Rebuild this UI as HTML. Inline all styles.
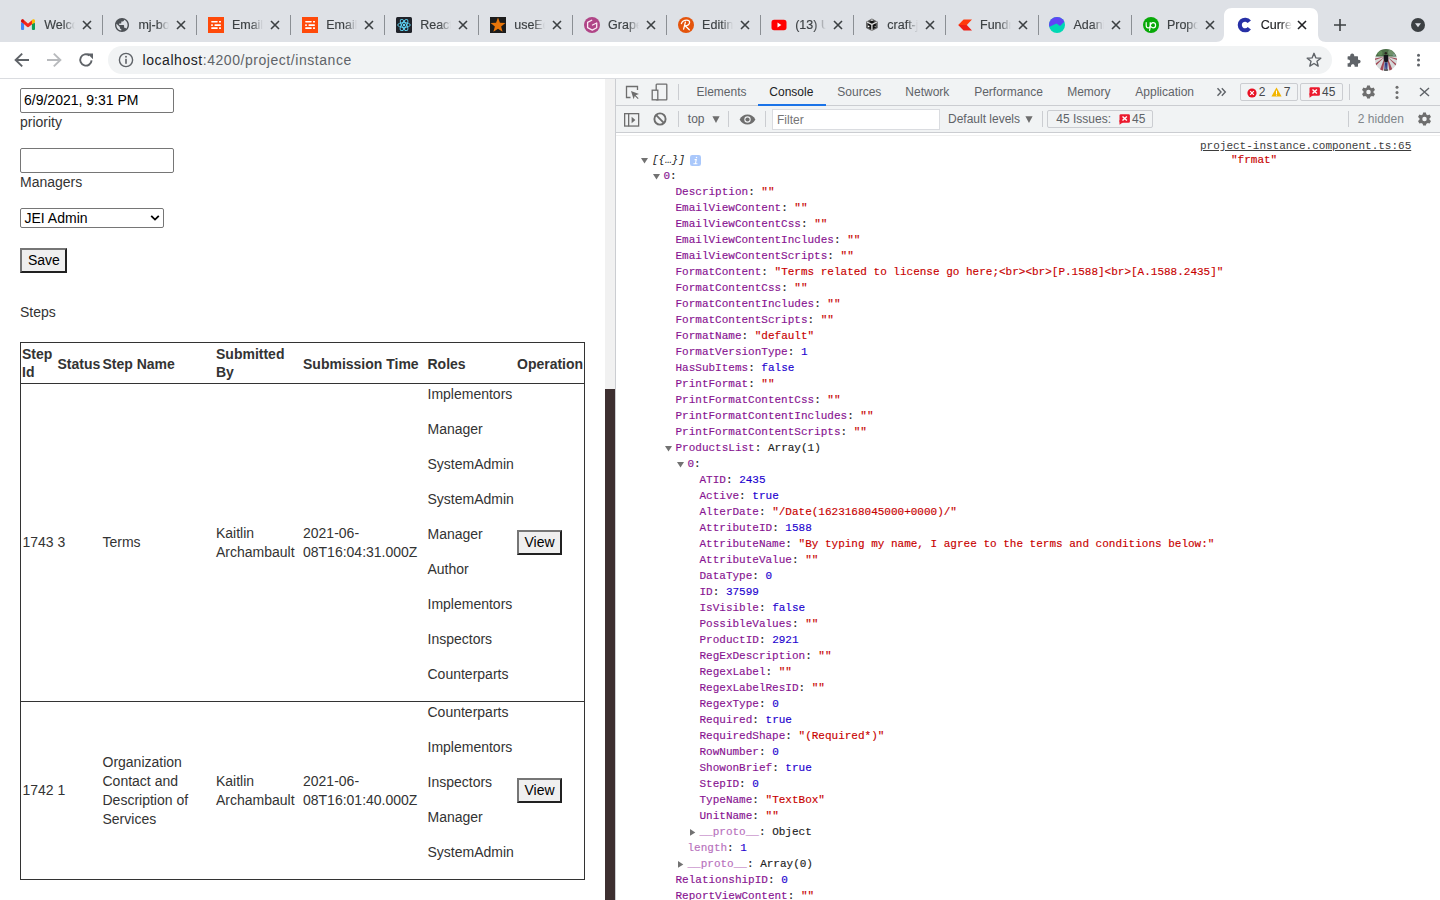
<!DOCTYPE html>
<html><head><meta charset="utf-8">
<style>
*{box-sizing:border-box;}
html,body{margin:0;padding:0;}
body{width:1440px;height:900px;overflow:hidden;position:relative;background:#fff;font-family:"Liberation Sans",sans-serif;}
.abs{position:absolute;}
#strip{position:absolute;left:0;top:0;width:1440px;height:42px;background:#dee1e6;}
.fav{position:absolute;top:17px;width:16px;height:16px;}
.ttl{position:absolute;top:17px;height:16px;font-size:12.5px;line-height:16px;color:#3c4043;white-space:nowrap;overflow:hidden;width:31px;-webkit-text-stroke:0.15px currentColor;
 -webkit-mask-image:linear-gradient(to right,#000 62%,transparent 100%);}
.cls{position:absolute;top:20px;width:10px;height:10px;}
.sep{position:absolute;top:15px;width:1px;height:20px;background:#8b8f94;}
#toolbar{position:absolute;left:0;top:42px;width:1440px;height:37px;background:#fff;border-bottom:1px solid #dadce0;}
#omni{position:absolute;left:108px;top:4px;width:1224px;height:28px;border-radius:14px;background:#f1f3f4;}
#url{position:absolute;left:34.5px;top:5px;font-size:14px;line-height:18px;color:#202124;letter-spacing:0.55px;white-space:nowrap;}
#url span{color:#5f6368;}
#page{position:absolute;left:0;top:79px;width:605px;height:821px;background:#fff;}
.t{position:absolute;font-size:14px;line-height:16px;color:#333;white-space:nowrap;}
.t.blk{color:#000;}
.t.b{font-weight:bold;}
.inp{position:absolute;border:1px solid #767676;border-radius:2px;background:#fff;}
.btn{position:absolute;background:#efefef;border:2px outset #767676;}
#sbar{position:absolute;left:605px;top:79px;width:10px;height:821px;background:#f1f1f1;}
#thumb{position:absolute;left:0;top:310px;width:10px;height:511px;background:#3d2f30;}
#dt{position:absolute;left:615px;top:79px;width:825px;height:821px;background:#fff;border-left:1px solid #cbcdd1;}
.ts{position:absolute;line-height:16px;white-space:nowrap;}
.tm{position:absolute;font-family:"Liberation Mono",monospace;font-size:11px;line-height:16px;white-space:pre;-webkit-text-stroke:0.15px currentColor;}

</style></head><body>
<div id="strip"></div>
<svg class="abs" style="left:1216px;top:8px" width="110" height="34" viewBox="0 0 110 34"><path d="M0 34 C5 34 8 31 8 26 L8 8 C8 3 11 0 16 0 L94 0 C99 0 102 3 102 8 L102 26 C102 31 105 34 110 34 Z" fill="#fff"/></svg>
<svg class="fav" style="left:20.0px" width="16" height="16" viewBox="0 0 16 16"><rect x="1" y="5.2" width="3.1" height="7.7" rx="1" fill="#4285f4"/><rect x="11.9" y="5.6" width="3.1" height="7.3" rx="1" fill="#0f9d58"/><path d="M2.6 3.9 L8 8.6 L12.6 4.8" stroke="#f4251a" stroke-width="3.1" stroke-linecap="round" stroke-linejoin="round" fill="none"/><path d="M11.9 6.6 L11.9 3.6 C11.9 2.8 12.6 2.2 13.45 2.2 C14.3 2.2 15 2.8 15 3.6 L15 5.3 L12.6 7 Z" fill="#fbbc04"/><circle cx="2.6" cy="3.9" r="1.55" fill="#d01010"/></svg>
<div class="ttl" style="left:44.2px;color:#3c4043">Welcome</div>
<svg class="cls" style="left:82.0px" width="10" height="10" viewBox="0 0 10 10"><path d="M1 1 L9 9 M9 1 L1 9" stroke="#3c4043" stroke-width="1.6"/></svg>
<div class="sep" style="left:102.0px"></div>
<svg class="fav" style="left:114.2px" width="16" height="16" viewBox="0 0 16 16"><g transform="translate(-0.4 -0.4) scale(0.7)"><path fill="#4d5156" d="M12 2C6.48 2 2 6.48 2 12s4.48 10 10 10 10-4.48 10-10S17.52 2 12 2zm-1 17.930c-3.950-.490-7-3.850-7-7.930 0-.620.080-1.210.210-1.790L9 15v1c0 1.100.900 2 2 2v1.930zm6.900-2.540c-.260-.810-1-1.390-1.900-1.390h-1v-3c0-.550-.450-1-1-1H8v-2h2c.550 0 1-.450 1-1V7h2c1.100 0 2-.900 2-2v-.410c2.930 1.190 5 4.060 5 7.410 0 2.080-.800 3.970-2.100 5.390z"/></g></svg>
<div class="ttl" style="left:138.4px;color:#3c4043">mj-body</div>
<svg class="cls" style="left:176.2px" width="10" height="10" viewBox="0 0 10 10"><path d="M1 1 L9 9 M9 1 L1 9" stroke="#3c4043" stroke-width="1.6"/></svg>
<div class="sep" style="left:196.2px"></div>
<svg class="fav" style="left:207.7px" width="16" height="16" viewBox="0 0 16 16"><rect x="0" y="0" width="16" height="16" fill="#ff4a0a"/><g fill="#fff"><rect x="3.1" y="3.9" width="6.7" height="1.7" rx="0.8"/><rect x="11" y="3.9" width="2" height="1.7" rx="0.4"/><rect x="3.1" y="7.3" width="1.8" height="1.7" rx="0.4"/><rect x="6.4" y="7.3" width="6.6" height="1.7" rx="0.8"/><rect x="3.1" y="10.3" width="6.7" height="1.7" rx="0.8"/><rect x="11" y="10.3" width="2" height="1.7" rx="0.4"/></g></svg>
<div class="ttl" style="left:231.9px;color:#3c4043">Email</div>
<svg class="cls" style="left:269.7px" width="10" height="10" viewBox="0 0 10 10"><path d="M1 1 L9 9 M9 1 L1 9" stroke="#3c4043" stroke-width="1.6"/></svg>
<div class="sep" style="left:289.7px"></div>
<svg class="fav" style="left:302.0px" width="16" height="16" viewBox="0 0 16 16"><rect x="0" y="0" width="16" height="16" fill="#ff4a0a"/><g fill="#fff"><rect x="3.1" y="3.9" width="6.7" height="1.7" rx="0.8"/><rect x="11" y="3.9" width="2" height="1.7" rx="0.4"/><rect x="3.1" y="7.3" width="1.8" height="1.7" rx="0.4"/><rect x="6.4" y="7.3" width="6.6" height="1.7" rx="0.8"/><rect x="3.1" y="10.3" width="6.7" height="1.7" rx="0.8"/><rect x="11" y="10.3" width="2" height="1.7" rx="0.4"/></g></svg>
<div class="ttl" style="left:326.2px;color:#3c4043">Email</div>
<svg class="cls" style="left:364.0px" width="10" height="10" viewBox="0 0 10 10"><path d="M1 1 L9 9 M9 1 L1 9" stroke="#3c4043" stroke-width="1.6"/></svg>
<div class="sep" style="left:384.0px"></div>
<svg class="fav" style="left:396.0px" width="16" height="16" viewBox="0 0 16 16"><rect x="0" y="0" width="16" height="16" rx="1.5" fill="#20232a"/><g fill="none" stroke="#61dafb" stroke-width="0.9"><ellipse cx="8" cy="8" rx="6.3" ry="2.4"/><ellipse cx="8" cy="8" rx="6.3" ry="2.4" transform="rotate(60 8 8)"/><ellipse cx="8" cy="8" rx="6.3" ry="2.4" transform="rotate(120 8 8)"/></g><circle cx="8" cy="8" r="1.2" fill="#61dafb"/></svg>
<div class="ttl" style="left:420.2px;color:#3c4043">React</div>
<svg class="cls" style="left:458.0px" width="10" height="10" viewBox="0 0 10 10"><path d="M1 1 L9 9 M9 1 L1 9" stroke="#3c4043" stroke-width="1.6"/></svg>
<div class="sep" style="left:478.0px"></div>
<svg class="fav" style="left:490.0px" width="16" height="16" viewBox="0 0 16 16"><rect x="0" y="0" width="16" height="16" fill="#1c1c1c"/><path d="M8.00 0.60 L9.94 5.73 L15.42 5.99 L11.14 9.42 L12.58 14.71 L8.00 11.70 L3.42 14.71 L4.86 9.42 L0.58 5.99 L6.06 5.73 Z" fill="#e8750a"/></svg>
<div class="ttl" style="left:514.2px;color:#3c4043">useEditor</div>
<svg class="cls" style="left:552.0px" width="10" height="10" viewBox="0 0 10 10"><path d="M1 1 L9 9 M9 1 L1 9" stroke="#3c4043" stroke-width="1.6"/></svg>
<div class="sep" style="left:572.0px"></div>
<svg class="fav" style="left:583.9px" width="16" height="16" viewBox="0 0 16 16"><circle cx="8" cy="8" r="8" fill="#b04587"/><path d="M7.7 3.2 L3.6 5.4 L3.6 10.7 L8.3 13.1 L12.7 10.7 L12.7 6 L8.5 8" fill="none" stroke="#fbeaf4" stroke-width="1.3" stroke-linejoin="round" stroke-linecap="round"/></svg>
<div class="ttl" style="left:608.1px;color:#3c4043">GrapesJS</div>
<svg class="cls" style="left:645.9px" width="10" height="10" viewBox="0 0 10 10"><path d="M1 1 L9 9 M9 1 L1 9" stroke="#3c4043" stroke-width="1.6"/></svg>
<div class="sep" style="left:665.9px"></div>
<svg class="fav" style="left:677.9px" width="16" height="16" viewBox="0 0 16 16"><circle cx="8" cy="8" r="8" fill="#e4540c"/><path d="M3.4 6.6 C4 4.6 6.4 3.1 8.8 3.1 C10.6 3.1 11.7 3.9 11.6 5.2 C11.5 6.9 9.6 8.6 7.4 9 L11.3 12.8 M7.4 5.2 C6.8 7.6 6.2 10 5.6 12.2" fill="none" stroke="#fff" stroke-width="1.3" stroke-linecap="round" stroke-linejoin="round"/></svg>
<div class="ttl" style="left:702.1px;color:#3c4043">Editing</div>
<svg class="cls" style="left:739.9px" width="10" height="10" viewBox="0 0 10 10"><path d="M1 1 L9 9 M9 1 L1 9" stroke="#3c4043" stroke-width="1.6"/></svg>
<div class="sep" style="left:759.9px"></div>
<svg class="fav" style="left:771.0px" width="16" height="16" viewBox="0 0 16 16"><rect x="0.5" y="2.8" width="15" height="10.4" rx="2.6" fill="#f00"/><path d="M6.5 5.6 L10.4 8 L6.5 10.4 Z" fill="#fff"/></svg>
<div class="ttl" style="left:795.2px;color:#3c4043">(13) Using</div>
<svg class="cls" style="left:833.0px" width="10" height="10" viewBox="0 0 10 10"><path d="M1 1 L9 9 M9 1 L1 9" stroke="#3c4043" stroke-width="1.6"/></svg>
<div class="sep" style="left:853.0px"></div>
<svg class="fav" style="left:863.1px" width="16" height="16" viewBox="0 0 16 16"><path d="M8.9 1.6 L14.7 4.7 L14.7 10.9 L8.9 14 L3.1 10.9 L3.1 4.7 Z" fill="#5a5a5a"/><path d="M5.2 6.2 L8.2 8 L8.2 12.2 L4.6 10.2 Z M12.6 6.2 L9.6 8 L9.6 12.2 L13.2 10.2 Z M6 4.9 L8.9 3.4 L11.8 4.9 L8.9 6.6 Z" fill="#111"/><path d="M8.9 7.6 L8.9 13.4 M8.9 7.6 L3.9 5 M8.9 7.6 L13.9 5" stroke="#e6e6e6" stroke-width="1.1"/><ellipse cx="8.9" cy="3.1" rx="1.2" ry="0.7" fill="#fff"/><circle cx="5.6" cy="9.4" r="0.9" fill="#fff"/><circle cx="12.2" cy="9.4" r="0.7" fill="#aaa"/></svg>
<div class="ttl" style="left:887.3px;color:#3c4043">craft-js</div>
<svg class="cls" style="left:925.1px" width="10" height="10" viewBox="0 0 10 10"><path d="M1 1 L9 9 M9 1 L1 9" stroke="#3c4043" stroke-width="1.6"/></svg>
<div class="sep" style="left:945.1px"></div>
<svg class="fav" style="left:955.8px" width="16" height="16" viewBox="0 0 16 16"><path d="M2.2 8 L7.6 2.6 L16 2.6 L10.8 8 Z" fill="#ff3a0c"/><path d="M2.2 8 L10.8 8 L16 13.4 L7.6 13.4 Z" fill="#ee1f14"/></svg>
<div class="ttl" style="left:980.0px;color:#3c4043">Fundraising</div>
<svg class="cls" style="left:1017.8px" width="10" height="10" viewBox="0 0 10 10"><path d="M1 1 L9 9 M9 1 L1 9" stroke="#3c4043" stroke-width="1.6"/></svg>
<div class="sep" style="left:1037.8px"></div>
<svg class="fav" style="left:1049.2px" width="16" height="16" viewBox="0 0 16 16"><defs><clipPath id="cc"><circle cx="8" cy="8" r="8"/></clipPath></defs><g clip-path="url(#cc)"><rect width="16" height="16" fill="#00d8b4"/><path d="M0 0 L16 0 L16 4 L11 9 L7.5 6.5 L0 10 Z" fill="#6045f5"/></g></svg>
<div class="ttl" style="left:1073.4px;color:#3c4043">Adani</div>
<svg class="cls" style="left:1111.2px" width="10" height="10" viewBox="0 0 10 10"><path d="M1 1 L9 9 M9 1 L1 9" stroke="#3c4043" stroke-width="1.6"/></svg>
<div class="sep" style="left:1131.2px"></div>
<svg class="fav" style="left:1142.7px" width="16" height="16" viewBox="0 0 16 16"><circle cx="8" cy="8" r="8" fill="#08a908"/><path d="M3.2 5.6 L3.2 8.6 C3.2 10.2 4 11 5.2 11 C6.4 11 7.2 10.2 7.2 8.6 L7.2 5.6 M7.2 8.8 C7.6 7 8.6 5.6 10 5.6 C11.4 5.6 12.6 6.6 12.6 8.2 C12.6 9.8 11.4 10.8 10 10.8 C9 10.8 8 10 7.4 9.2 L6.6 13.4" fill="none" stroke="#fff" stroke-width="1.15" stroke-linecap="round" stroke-linejoin="round"/></svg>
<div class="ttl" style="left:1166.9px;color:#3c4043">Proposals</div>
<svg class="cls" style="left:1204.7px" width="10" height="10" viewBox="0 0 10 10"><path d="M1 1 L9 9 M9 1 L1 9" stroke="#3c4043" stroke-width="1.6"/></svg>
<svg class="fav" style="left:1236.5px" width="16" height="16" viewBox="0 0 16 16"><path d="M12.3 4.8 A5.3 5.3 0 1 0 12.3 11.2" fill="none" stroke="#2730a6" stroke-width="4.1"/></svg>
<div class="ttl" style="left:1260.7px;color:#202124">Current</div>
<svg class="cls" style="left:1297.0px" width="10" height="10" viewBox="0 0 10 10"><path d="M1 1 L9 9 M9 1 L1 9" stroke="#202124" stroke-width="1.6"/></svg>
<svg class="abs" style="left:1333px;top:19px" width="14" height="12" viewBox="0 0 14 12"><path d="M7 0 L7 12 M1 6 L13 6" stroke="#3c4043" stroke-width="1.6"/></svg>
<svg class="abs" style="left:1411px;top:18px" width="14" height="14" viewBox="0 0 14 14"><circle cx="7" cy="7" r="7" fill="#3c4043"/><path d="M4 5.3 L10 5.3 L7 9.3Z" fill="#dee1e6"/></svg>
<div id="toolbar">
<div id="omni"><div id="url">localhost<span>:4200/project/instance</span></div></div>
</div>
<svg class="abs" style="left:14px;top:52px" width="16" height="16" viewBox="0 0 16 16"><path d="M15 8 L2.2 8 M8.2 1.6 L1.6 8 L8.2 14.4" fill="none" stroke="#5f6368" stroke-width="1.9"/></svg>
<svg class="abs" style="left:46px;top:52px" width="16" height="16" viewBox="0 0 16 16"><path d="M1 8 L13.8 8 M7.8 1.6 L14.4 8 L7.8 14.4" fill="none" stroke="#b8babd" stroke-width="1.9"/></svg>
<svg class="abs" style="left:78px;top:52px" width="16" height="16" viewBox="0 0 16 16"><path d="M13.6 8.4 A5.7 5.7 0 1 1 11.4 3.4" fill="none" stroke="#5f6368" stroke-width="1.9"/><path d="M9.2 1.4 L15 1.4 L15 7.2 Z" fill="#5f6368"/></svg>
<svg class="abs" style="left:118px;top:52px" width="16" height="16" viewBox="0 0 16 16"><circle cx="8" cy="8" r="6.6" fill="none" stroke="#5f6368" stroke-width="1.4"/><rect x="7.2" y="6.8" width="1.6" height="5" fill="#5f6368"/><circle cx="8" cy="4.8" r="0.95" fill="#5f6368"/></svg>
<svg class="abs" style="left:1306px;top:52px" width="16" height="16" viewBox="0 0 16 16"><path d="M8 1.3 L9.9 5.9 L14.8 6.2 L11 9.3 L12.2 14.1 L8 11.5 L3.8 14.1 L5 9.3 L1.2 6.2 L6.1 5.9 Z" fill="none" stroke="#5f6368" stroke-width="1.4" stroke-linejoin="round"/></svg>
<svg class="abs" style="left:1346px;top:52px" width="16" height="16" viewBox="0 0 16 16"><path d="M6.2 1.6 C7.6 1.6 8.2 2.6 8.2 3.6 L8.2 4.2 L11.4 4.2 C11.8 4.2 12 4.4 12 4.8 L12 7.8 L12.6 7.8 C13.8 7.8 14.6 8.6 14.6 9.6 C14.6 10.6 13.8 11.4 12.6 11.4 L12 11.4 L12 14.2 C12 14.6 11.8 14.8 11.4 14.8 L8.6 14.8 L8.6 14 C8.6 12.8 7.8 12.2 6.8 12.2 C5.8 12.2 5 12.8 5 14 L5 14.8 L2.2 14.8 C1.8 14.8 1.6 14.6 1.6 14.2 L1.6 11.2 L2.2 11.2 C3.4 11.2 4 10.4 4 9.4 C4 8.4 3.4 7.6 2.2 7.6 L1.6 7.6 L1.6 4.8 C1.6 4.4 1.8 4.2 2.2 4.2 L4.2 4.2 L4.2 3.6 C4.2 2.6 4.8 1.6 6.2 1.6Z" fill="#5f6368"/></svg>
<svg class="abs" style="left:1375px;top:49px" width="22" height="22" viewBox="0 0 22 22"><defs><clipPath id="av"><circle cx="11" cy="11" r="11"/></clipPath></defs><g clip-path="url(#av)"><rect width="22" height="22" fill="#d6d9d9"/><rect width="22" height="7.5" fill="#4b6e47"/><circle cx="5" cy="4" r="2.5" fill="#5f8a58"/><circle cx="16" cy="3.5" r="3" fill="#6f8f6a"/><circle cx="19" cy="6" r="1.5" fill="#7c9a8a"/><path d="M10 7.5 L0 9.5 L0 11 Z M10 7.5 L0 15 L0 17.5 Z M10 7.5 L4.5 22 L8 22 Z M12 7.5 L22 9.5 L22 11 Z M12 7.5 L22 15.5 L22 18 Z M12 7.5 L14.5 22 L18 22 Z" fill="#a34a57"/><circle cx="10.8" cy="4.2" r="1.2" fill="#2a2420"/><path d="M8.8 6 L13 6 L13.4 10 L12.6 13.5 L9.6 13.5 L8.6 10 Z" fill="#15151c"/><path d="M9.6 13.5 L12.6 13.5 L12.4 20.5 L11.2 20.5 L11 15.5 L10.6 20.5 L9.4 20.5 Z" fill="#2b3c86"/><rect x="9" y="20.5" width="4" height="1.2" fill="#222"/></g></svg>
<svg class="abs" style="left:1416px;top:53px" width="5" height="15" viewBox="0 0 5 15"><circle cx="2.5" cy="2.2" r="1.5" fill="#5f6368"/><circle cx="2.5" cy="7.1" r="1.5" fill="#5f6368"/><circle cx="2.5" cy="12" r="1.5" fill="#5f6368"/></svg>

<div id="page"></div>
<div class="inp" style="left:20px;top:88px;width:154px;height:25px;"></div>
<div class="t blk" style="left:24px;top:92.15px;">6/9/2021, 9:31 PM</div>
<div class="t" style="left:20px;top:113.65px;">priority</div>
<div class="inp" style="left:20px;top:148px;width:154px;height:25px;"></div>
<div class="t" style="left:20px;top:173.75px;">Managers</div>
<div class="inp" style="left:20px;top:208px;width:144px;height:20px;"></div>
<div class="t blk" style="left:24.5px;top:210.05px;">JEI Admin</div>
<svg class="abs" style="left:150px;top:214px" width="10" height="8" viewBox="0 0 10 8"><path d="M1.2 1.8 L5 5.6 L8.8 1.8" fill="none" stroke="#000" stroke-width="1.8"/></svg>
<div class="btn" style="left:20px;top:248px;width:47px;height:25px;"></div>
<div class="t blk" style="left:28px;top:252.15px;">Save</div>
<div class="t" style="left:20px;top:303.95px;">Steps</div>
<div class="abs" style="left:20px;top:342px;width:565px;height:538px;border:1px solid #333;"></div>
<div class="abs" style="left:20px;top:383px;width:565px;height:1px;background:#333;"></div>
<div class="abs" style="left:20px;top:701px;width:565px;height:1px;background:#333;"></div>
<div class="t b" style="left:22px;top:345.65px;">Step</div>
<div class="t b" style="left:22px;top:364.15px;">Id</div>
<div class="t b" style="left:57.5px;top:355.75px;">Status</div>
<div class="t b" style="left:102.5px;top:355.75px;">Step Name</div>
<div class="t b" style="left:216px;top:345.65px;">Submitted</div>
<div class="t b" style="left:216px;top:364.15px;">By</div>
<div class="t b" style="left:303px;top:355.75px;">Submission Time</div>
<div class="t b" style="left:427.5px;top:355.75px;">Roles</div>
<div class="t b" style="left:517px;top:355.75px;">Operation</div>
<div class="t" style="left:22.5px;top:533.85px;">1743</div>
<div class="t" style="left:57.5px;top:533.85px;">3</div>
<div class="t" style="left:102.5px;top:533.85px;">Terms</div>
<div class="t" style="left:216px;top:524.65px;">Kaitlin</div>
<div class="t" style="left:216px;top:543.85px;">Archambault</div>
<div class="t" style="left:303px;top:524.65px;">2021-06-</div>
<div class="t" style="left:303px;top:543.85px;">08T16:04:31.000Z</div>
<div class="t" style="left:427.5px;top:385.90px;">Implementors</div>
<div class="t" style="left:427.5px;top:420.90px;">Manager</div>
<div class="t" style="left:427.5px;top:455.90px;">SystemAdmin</div>
<div class="t" style="left:427.5px;top:490.90px;">SystemAdmin</div>
<div class="t" style="left:427.5px;top:525.90px;">Manager</div>
<div class="t" style="left:427.5px;top:560.90px;">Author</div>
<div class="t" style="left:427.5px;top:595.90px;">Implementors</div>
<div class="t" style="left:427.5px;top:630.90px;">Inspectors</div>
<div class="t" style="left:427.5px;top:665.90px;">Counterparts</div>
<div class="btn" style="left:517px;top:530px;width:45px;height:25px;"></div>
<div class="t blk" style="left:524.5px;top:534.15px;">View</div>
<div class="t" style="left:22.5px;top:782.15px;">1742</div>
<div class="t" style="left:57.5px;top:782.15px;">1</div>
<div class="t" style="left:102.5px;top:753.85px;">Organization</div>
<div class="t" style="left:102.5px;top:772.85px;">Contact and</div>
<div class="t" style="left:102.5px;top:791.85px;">Description of</div>
<div class="t" style="left:102.5px;top:810.85px;">Services</div>
<div class="t" style="left:216px;top:772.85px;">Kaitlin</div>
<div class="t" style="left:216px;top:791.85px;">Archambault</div>
<div class="t" style="left:303px;top:772.85px;">2021-06-</div>
<div class="t" style="left:303px;top:791.85px;">08T16:01:40.000Z</div>
<div class="t" style="left:427.5px;top:704.15px;">Counterparts</div>
<div class="t" style="left:427.5px;top:739.15px;">Implementors</div>
<div class="t" style="left:427.5px;top:774.15px;">Inspectors</div>
<div class="t" style="left:427.5px;top:809.15px;">Manager</div>
<div class="t" style="left:427.5px;top:844.15px;">SystemAdmin</div>
<div class="btn" style="left:517px;top:778px;width:45px;height:25px;"></div>
<div class="t blk" style="left:524.5px;top:782.15px;">View</div>

<div id="sbar"><div id="thumb"></div></div>
<div id="dt"></div>
<div class="abs" style="left:616px;top:79px;width:824px;height:27px;background:#f1f3f4;border-bottom:1px solid #cbcdd1;"></div>
<div class="abs" style="left:616px;top:106px;width:824px;height:27px;background:#f1f3f4;border-bottom:1px solid #cbcdd1;"></div>
<svg class="abs" style="left:625px;top:85px;" width="15" height="15" viewBox="0 0 15 15"><path d="M5.5 12.5 L1.5 12.5 L1.5 1.5 L12.5 1.5 L12.5 5" fill="none" stroke="#6e6e6e" stroke-width="1.3"/><path d="M6 6 L14 9 L10.6 10.3 L13.6 13.3 L12.8 14.1 L9.8 11.1 L8.6 14.2 Z" fill="#6e6e6e"/></svg>
<svg class="abs" style="left:651px;top:83px;" width="17" height="18" viewBox="0 0 17 18"><rect x="5.2" y="1.2" width="10.6" height="15.6" rx="0.6" fill="none" stroke="#6e6e6e" stroke-width="1.3"/><rect x="1.2" y="7.2" width="5.6" height="9.6" fill="#f1f3f4" stroke="#6e6e6e" stroke-width="1.3"/></svg>
<div class="abs" style="left:678px;top:84px;width:1px;height:16px;background:#cbcdd1;"></div>
<div class="ts" style="left:696.5px;top:83.64px;font-size:12px;color:#5f6368;">Elements</div>
<div class="ts" style="left:769.3px;top:83.64px;font-size:12px;color:#202124;">Console</div>
<div class="ts" style="left:837.3px;top:83.64px;font-size:12px;color:#5f6368;">Sources</div>
<div class="ts" style="left:905.3px;top:83.64px;font-size:12px;color:#5f6368;">Network</div>
<div class="ts" style="left:974.2px;top:83.64px;font-size:12px;color:#5f6368;">Performance</div>
<div class="ts" style="left:1067.2px;top:83.64px;font-size:12px;color:#5f6368;">Memory</div>
<div class="ts" style="left:1135.3px;top:83.64px;font-size:12px;color:#5f6368;">Application</div>
<div class="abs" style="left:758px;top:104px;width:68px;height:2px;background:#1a73e8;"></div>
<svg class="abs" style="left:1216px;top:87px;" width="11" height="10" viewBox="0 0 11 10"><path d="M1.5 1.2 L5 5 L1.5 8.8 M5.8 1.2 L9.3 5 L5.8 8.8" fill="none" stroke="#5f6368" stroke-width="1.4"/></svg>
<div class="abs" style="left:1240px;top:83px;width:58px;height:18px;border:1px solid #cbcdd1;border-radius:2px;background:#f1f3f4;"></div>
<svg class="abs" style="left:1246.5px;top:87.5px;" width="10" height="10" viewBox="0 0 10 10"><circle cx="5" cy="5" r="4.6" fill="#e81123" /><path d="M3.2 3.2 L6.8 6.8 M6.8 3.2 L3.2 6.8" stroke="#fff" stroke-width="1.2"/></svg>
<div class="ts" style="left:1258.8px;top:83.64px;font-size:12px;color:#45484c;">2</div>
<svg class="abs" style="left:1271px;top:87px;" width="11" height="10" viewBox="0 0 11 10"><path d="M5.5 0.6 L10.6 9.6 L0.4 9.6 Z" fill="#f2b500"/><rect x="5" y="3.6" width="1" height="3.4" fill="#fff"/><rect x="5" y="7.6" width="1" height="1" fill="#fff"/></svg>
<div class="ts" style="left:1283.8px;top:83.64px;font-size:12px;color:#45484c;">7</div>
<div class="abs" style="left:1300px;top:83px;width:43px;height:18px;border:1px solid #cbcdd1;border-radius:2px;background:#f1f3f4;"></div>
<svg class="abs" style="left:1308.5px;top:87px;" width="11" height="11" viewBox="0 0 11 11"><rect x="0.5" y="0.3" width="10.4" height="8.4" rx="1.3" fill="#eb1a2e"/><path d="M0.5 6 L0.5 10.8 L4 8.2 Z" fill="#eb1a2e"/><path d="M3.5 2.4 L7.9 6.6 M7.9 2.4 L3.5 6.6" stroke="#fff" stroke-width="1.4"/></svg>
<div class="ts" style="left:1322px;top:83.64px;font-size:12px;color:#45484c;">45</div>
<div class="abs" style="left:1349px;top:84px;width:1px;height:16px;background:#cbcdd1;"></div>
<svg class="abs" style="left:1360.5px;top:85px;" width="15" height="14" viewBox="0 0 15 14"><path fill="#6e6e6e" fill-rule="evenodd" d="M6.1 0.5 L8.9 0.5 L9.3 2.4 C9.8 2.6 10.3 2.9 10.7 3.2 L12.6 2.6 L14 5 L12.5 6.3 C12.6 6.8 12.6 7.3 12.5 7.8 L14 9.1 L12.6 11.5 L10.7 10.9 C10.3 11.2 9.8 11.5 9.3 11.7 L8.9 13.6 L6.1 13.6 L5.7 11.7 C5.2 11.5 4.7 11.2 4.3 10.9 L2.4 11.5 L1 9.1 L2.5 7.8 C2.4 7.3 2.4 6.8 2.5 6.3 L1 5 L2.4 2.6 L4.3 3.2 C4.7 2.9 5.2 2.6 5.7 2.4 Z M7.5 4.8 A2.25 2.25 0 1 0 7.5 9.3 A2.25 2.25 0 1 0 7.5 4.8 Z"/></svg>
<svg class="abs" style="left:1394.5px;top:85px;" width="4" height="15" viewBox="0 0 4 15"><circle cx="2" cy="2.3" r="1.5" fill="#6e6e6e"/><circle cx="2" cy="7.4" r="1.5" fill="#6e6e6e"/><circle cx="2" cy="12.5" r="1.5" fill="#6e6e6e"/></svg>
<svg class="abs" style="left:1418.5px;top:87px;" width="11" height="10" viewBox="0 0 11 10"><path d="M1 0.9 L10 9.1 M10 0.9 L1 9.1" stroke="#5f6368" stroke-width="1.4"/></svg>
<svg class="abs" style="left:623.5px;top:112.5px;" width="16" height="14" viewBox="0 0 16 14"><rect x="0.65" y="0.65" width="14" height="12.4" fill="none" stroke="#6e6e6e" stroke-width="1.3"/><rect x="4" y="0.6" width="1.3" height="12.8" fill="#6e6e6e"/><path d="M7.6 3.8 L11.4 7 L7.6 10.2 Z" fill="#6e6e6e"/></svg>
<svg class="abs" style="left:653px;top:112px;" width="14" height="14" viewBox="0 0 14 14"><circle cx="7" cy="7" r="5.6" fill="none" stroke="#6e6e6e" stroke-width="1.9"/><path d="M3.2 3.2 L10.8 10.8" stroke="#6e6e6e" stroke-width="1.9"/></svg>
<div class="abs" style="left:678px;top:111px;width:1px;height:16px;background:#cbcdd1;"></div>
<div class="ts" style="left:687.8px;top:111.04px;font-size:12px;color:#5f6368;">top</div>
<svg class="abs" style="left:711.5px;top:115.5px;" width="8" height="7" viewBox="0 0 8 7"><path d="M0.4 0.3 L7.6 0.3 L4 6.9 Z" fill="#6e6e6e"/></svg>
<div class="abs" style="left:728px;top:111px;width:1px;height:16px;background:#cbcdd1;"></div>
<svg class="abs" style="left:738.5px;top:114px;" width="17" height="11" viewBox="0 0 17 11"><path d="M0.6 5.5 C2.4 2 5.2 0.4 8.5 0.4 C11.8 0.4 14.6 2 16.4 5.5 C14.6 9 11.8 10.6 8.5 10.6 C5.2 10.6 2.4 9 0.6 5.5 Z" fill="#6e6e6e"/><circle cx="8.5" cy="5.5" r="3.2" fill="#f1f3f4"/><circle cx="8.5" cy="5.5" r="2.1" fill="#6e6e6e"/></svg>
<div class="abs" style="left:765px;top:111px;width:1px;height:16px;background:#cbcdd1;"></div>
<div class="abs" style="left:772px;top:109px;width:168px;height:21px;background:#fff;border:1px solid #dadce0;"></div>
<div class="ts" style="left:777px;top:111.84px;font-size:12px;color:#757575;">Filter</div>
<div class="ts" style="left:948px;top:110.84px;font-size:12px;color:#5f6368;">Default levels</div>
<svg class="abs" style="left:1025px;top:115.5px;" width="8" height="7" viewBox="0 0 8 7"><path d="M0.4 0.3 L7.6 0.3 L4 6.9 Z" fill="#6e6e6e"/></svg>
<div class="abs" style="left:1042px;top:111px;width:1px;height:16px;background:#cbcdd1;"></div>
<div class="abs" style="left:1047px;top:110px;width:106px;height:18px;border:1px solid #cbcdd1;border-radius:2px;background:#f1f3f4;"></div>
<div class="ts" style="left:1056.3px;top:110.84px;font-size:12px;color:#5f6368;">45 Issues:</div>
<svg class="abs" style="left:1118.5px;top:113.5px;" width="11" height="11" viewBox="0 0 11 11"><rect x="0.5" y="0.3" width="10.4" height="8.4" rx="1.3" fill="#eb1a2e"/><path d="M0.5 6 L0.5 10.8 L4 8.2 Z" fill="#eb1a2e"/><path d="M3.5 2.4 L7.9 6.6 M7.9 2.4 L3.5 6.6" stroke="#fff" stroke-width="1.4"/></svg>
<div class="ts" style="left:1132px;top:110.84px;font-size:12px;color:#5f6368;">45</div>
<div class="abs" style="left:1348px;top:111px;width:1px;height:16px;background:#cbcdd1;"></div>
<div class="ts" style="left:1357.8px;top:110.84px;font-size:12px;color:#80868b;">2 hidden</div>
<svg class="abs" style="left:1416.5px;top:112px;" width="15" height="14" viewBox="0 0 15 14"><path fill="#6e6e6e" fill-rule="evenodd" d="M6.1 0.5 L8.9 0.5 L9.3 2.4 C9.8 2.6 10.3 2.9 10.7 3.2 L12.6 2.6 L14 5 L12.5 6.3 C12.6 6.8 12.6 7.3 12.5 7.8 L14 9.1 L12.6 11.5 L10.7 10.9 C10.3 11.2 9.8 11.5 9.3 11.7 L8.9 13.6 L6.1 13.6 L5.7 11.7 C5.2 11.5 4.7 11.2 4.3 10.9 L2.4 11.5 L1 9.1 L2.5 7.8 C2.4 7.3 2.4 6.8 2.5 6.3 L1 5 L2.4 2.6 L4.3 3.2 C4.7 2.9 5.2 2.6 5.7 2.4 Z M7.5 4.8 A2.25 2.25 0 1 0 7.5 9.3 A2.25 2.25 0 1 0 7.5 4.8 Z"/></svg>
<div class="abs" style="left:616px;top:135px;width:824px;height:1px;background:#f0f0f0;"></div>
<div class="tm" style="left:1200px;top:138.37px;color:#3c3c3c;text-decoration:underline;-webkit-text-stroke:0;">project-instance.component.ts:65</div>
<div class="tm" style="left:1231px;top:152.27px;color:#c80000;">"frmat"</div>
<svg class="abs" style="left:641.2px;top:157.8px;" width="7" height="6" viewBox="0 0 7 6"><path d="M0 0 L7 0 L3.5 5.4 Z" fill="#727272"/></svg>
<div class="tm" style="left:652px;top:151.82px;color:#222;font-style:italic;-webkit-text-stroke:0;">[{…}]</div>
<svg class="abs" style="left:690px;top:155px;" width="11" height="11" viewBox="0 0 11 11"><rect width="11" height="11" rx="2.2" fill="#aac8fb"/><circle cx="6.5" cy="2.6" r="0.75" fill="#fff"/><path d="M4.6 4.6 L6.3 4.6 L5.5 8.4 M3.4 8.7 L7.4 8.7" fill="none" stroke="#fff" stroke-width="1.1"/></svg>
<svg class="abs" style="left:652.7px;top:173.8px;" width="7" height="6" viewBox="0 0 7 6"><path d="M0 0 L7 0 L3.5 5.4 Z" fill="#727272"/></svg>
<div class="tm" style="left:663.5px;top:167.82px;"><span style="color:#881391">0</span><span style="color:#222">:</span></div>
<div class="tm" style="left:675.5px;top:183.82px;"><span style="color:#881391">Description</span><span style="color:#222">:</span> <span style="color:#c80000">""</span></div>
<div class="tm" style="left:675.5px;top:199.82px;"><span style="color:#881391">EmailViewContent</span><span style="color:#222">:</span> <span style="color:#c80000">""</span></div>
<div class="tm" style="left:675.5px;top:215.82px;"><span style="color:#881391">EmailViewContentCss</span><span style="color:#222">:</span> <span style="color:#c80000">""</span></div>
<div class="tm" style="left:675.5px;top:231.82px;"><span style="color:#881391">EmailViewContentIncludes</span><span style="color:#222">:</span> <span style="color:#c80000">""</span></div>
<div class="tm" style="left:675.5px;top:247.82px;"><span style="color:#881391">EmailViewContentScripts</span><span style="color:#222">:</span> <span style="color:#c80000">""</span></div>
<div class="tm" style="left:675.5px;top:263.82px;"><span style="color:#881391">FormatContent</span><span style="color:#222">:</span> <span style="color:#c80000">"Terms related to license go here;&lt;br&gt;&lt;br&gt;[P.1588]&lt;br&gt;[A.1588.2435]"</span></div>
<div class="tm" style="left:675.5px;top:279.82px;"><span style="color:#881391">FormatContentCss</span><span style="color:#222">:</span> <span style="color:#c80000">""</span></div>
<div class="tm" style="left:675.5px;top:295.82px;"><span style="color:#881391">FormatContentIncludes</span><span style="color:#222">:</span> <span style="color:#c80000">""</span></div>
<div class="tm" style="left:675.5px;top:311.82px;"><span style="color:#881391">FormatContentScripts</span><span style="color:#222">:</span> <span style="color:#c80000">""</span></div>
<div class="tm" style="left:675.5px;top:327.82px;"><span style="color:#881391">FormatName</span><span style="color:#222">:</span> <span style="color:#c80000">"default"</span></div>
<div class="tm" style="left:675.5px;top:343.82px;"><span style="color:#881391">FormatVersionType</span><span style="color:#222">:</span> <span style="color:#1c00cf">1</span></div>
<div class="tm" style="left:675.5px;top:359.82px;"><span style="color:#881391">HasSubItems</span><span style="color:#222">:</span> <span style="color:#1c00cf">false</span></div>
<div class="tm" style="left:675.5px;top:375.82px;"><span style="color:#881391">PrintFormat</span><span style="color:#222">:</span> <span style="color:#c80000">""</span></div>
<div class="tm" style="left:675.5px;top:391.82px;"><span style="color:#881391">PrintFormatContentCss</span><span style="color:#222">:</span> <span style="color:#c80000">""</span></div>
<div class="tm" style="left:675.5px;top:407.82px;"><span style="color:#881391">PrintFormatContentIncludes</span><span style="color:#222">:</span> <span style="color:#c80000">""</span></div>
<div class="tm" style="left:675.5px;top:423.82px;"><span style="color:#881391">PrintFormatContentScripts</span><span style="color:#222">:</span> <span style="color:#c80000">""</span></div>
<svg class="abs" style="left:664.7px;top:445.8px;" width="7" height="6" viewBox="0 0 7 6"><path d="M0 0 L7 0 L3.5 5.4 Z" fill="#727272"/></svg>
<div class="tm" style="left:675.5px;top:439.82px;"><span style="color:#881391">ProductsList</span><span style="color:#222">:</span> <span style="color:#222">Array(1)</span></div>
<svg class="abs" style="left:676.7px;top:461.8px;" width="7" height="6" viewBox="0 0 7 6"><path d="M0 0 L7 0 L3.5 5.4 Z" fill="#727272"/></svg>
<div class="tm" style="left:687.5px;top:455.82px;"><span style="color:#881391">0</span><span style="color:#222">:</span></div>
<div class="tm" style="left:699.5px;top:471.82px;"><span style="color:#881391">ATID</span><span style="color:#222">:</span> <span style="color:#1c00cf">2435</span></div>
<div class="tm" style="left:699.5px;top:487.82px;"><span style="color:#881391">Active</span><span style="color:#222">:</span> <span style="color:#1c00cf">true</span></div>
<div class="tm" style="left:699.5px;top:503.82px;"><span style="color:#881391">AlterDate</span><span style="color:#222">:</span> <span style="color:#c80000">"/Date(1623168045000+0000)/"</span></div>
<div class="tm" style="left:699.5px;top:519.82px;"><span style="color:#881391">AttributeID</span><span style="color:#222">:</span> <span style="color:#1c00cf">1588</span></div>
<div class="tm" style="left:699.5px;top:535.82px;"><span style="color:#881391">AttributeName</span><span style="color:#222">:</span> <span style="color:#c80000">"By typing my name, I agree to the terms and conditions below:"</span></div>
<div class="tm" style="left:699.5px;top:551.82px;"><span style="color:#881391">AttributeValue</span><span style="color:#222">:</span> <span style="color:#c80000">""</span></div>
<div class="tm" style="left:699.5px;top:567.82px;"><span style="color:#881391">DataType</span><span style="color:#222">:</span> <span style="color:#1c00cf">0</span></div>
<div class="tm" style="left:699.5px;top:583.82px;"><span style="color:#881391">ID</span><span style="color:#222">:</span> <span style="color:#1c00cf">37599</span></div>
<div class="tm" style="left:699.5px;top:599.82px;"><span style="color:#881391">IsVisible</span><span style="color:#222">:</span> <span style="color:#1c00cf">false</span></div>
<div class="tm" style="left:699.5px;top:615.82px;"><span style="color:#881391">PossibleValues</span><span style="color:#222">:</span> <span style="color:#c80000">""</span></div>
<div class="tm" style="left:699.5px;top:631.82px;"><span style="color:#881391">ProductID</span><span style="color:#222">:</span> <span style="color:#1c00cf">2921</span></div>
<div class="tm" style="left:699.5px;top:647.82px;"><span style="color:#881391">RegExDescription</span><span style="color:#222">:</span> <span style="color:#c80000">""</span></div>
<div class="tm" style="left:699.5px;top:663.82px;"><span style="color:#881391">RegexLabel</span><span style="color:#222">:</span> <span style="color:#c80000">""</span></div>
<div class="tm" style="left:699.5px;top:679.82px;"><span style="color:#881391">RegexLabelResID</span><span style="color:#222">:</span> <span style="color:#c80000">""</span></div>
<div class="tm" style="left:699.5px;top:695.82px;"><span style="color:#881391">RegexType</span><span style="color:#222">:</span> <span style="color:#1c00cf">0</span></div>
<div class="tm" style="left:699.5px;top:711.82px;"><span style="color:#881391">Required</span><span style="color:#222">:</span> <span style="color:#1c00cf">true</span></div>
<div class="tm" style="left:699.5px;top:727.82px;"><span style="color:#881391">RequiredShape</span><span style="color:#222">:</span> <span style="color:#c80000">"(Required*)"</span></div>
<div class="tm" style="left:699.5px;top:743.82px;"><span style="color:#881391">RowNumber</span><span style="color:#222">:</span> <span style="color:#1c00cf">0</span></div>
<div class="tm" style="left:699.5px;top:759.82px;"><span style="color:#881391">ShowonBrief</span><span style="color:#222">:</span> <span style="color:#1c00cf">true</span></div>
<div class="tm" style="left:699.5px;top:775.82px;"><span style="color:#881391">StepID</span><span style="color:#222">:</span> <span style="color:#1c00cf">0</span></div>
<div class="tm" style="left:699.5px;top:791.82px;"><span style="color:#881391">TypeName</span><span style="color:#222">:</span> <span style="color:#c80000">"TextBox"</span></div>
<div class="tm" style="left:699.5px;top:807.82px;"><span style="color:#881391">UnitName</span><span style="color:#222">:</span> <span style="color:#c80000">""</span></div>
<svg class="abs" style="left:690.0px;top:828.75px;" width="6" height="7" viewBox="0 0 6 7"><path d="M0 0 L5.3 3.4 L0 6.8 Z" fill="#727272"/></svg>
<div class="tm" style="left:699.5px;top:823.82px;"><span style="color:#b871bd">__proto__</span><span style="color:#222">:</span> <span style="color:#222">Object</span></div>
<div class="tm" style="left:687.5px;top:839.82px;"><span style="color:#b871bd">length</span><span style="color:#222">:</span> <span style="color:#1c00cf">1</span></div>
<svg class="abs" style="left:678.0px;top:860.75px;" width="6" height="7" viewBox="0 0 6 7"><path d="M0 0 L5.3 3.4 L0 6.8 Z" fill="#727272"/></svg>
<div class="tm" style="left:687.5px;top:855.82px;"><span style="color:#b871bd">__proto__</span><span style="color:#222">:</span> <span style="color:#222">Array(0)</span></div>
<div class="tm" style="left:675.5px;top:871.82px;"><span style="color:#881391">RelationshipID</span><span style="color:#222">:</span> <span style="color:#1c00cf">0</span></div>
<div class="tm" style="left:675.5px;top:887.82px;"><span style="color:#881391">ReportViewContent</span><span style="color:#222">:</span> <span style="color:#c80000">""</span></div>

</body></html>
